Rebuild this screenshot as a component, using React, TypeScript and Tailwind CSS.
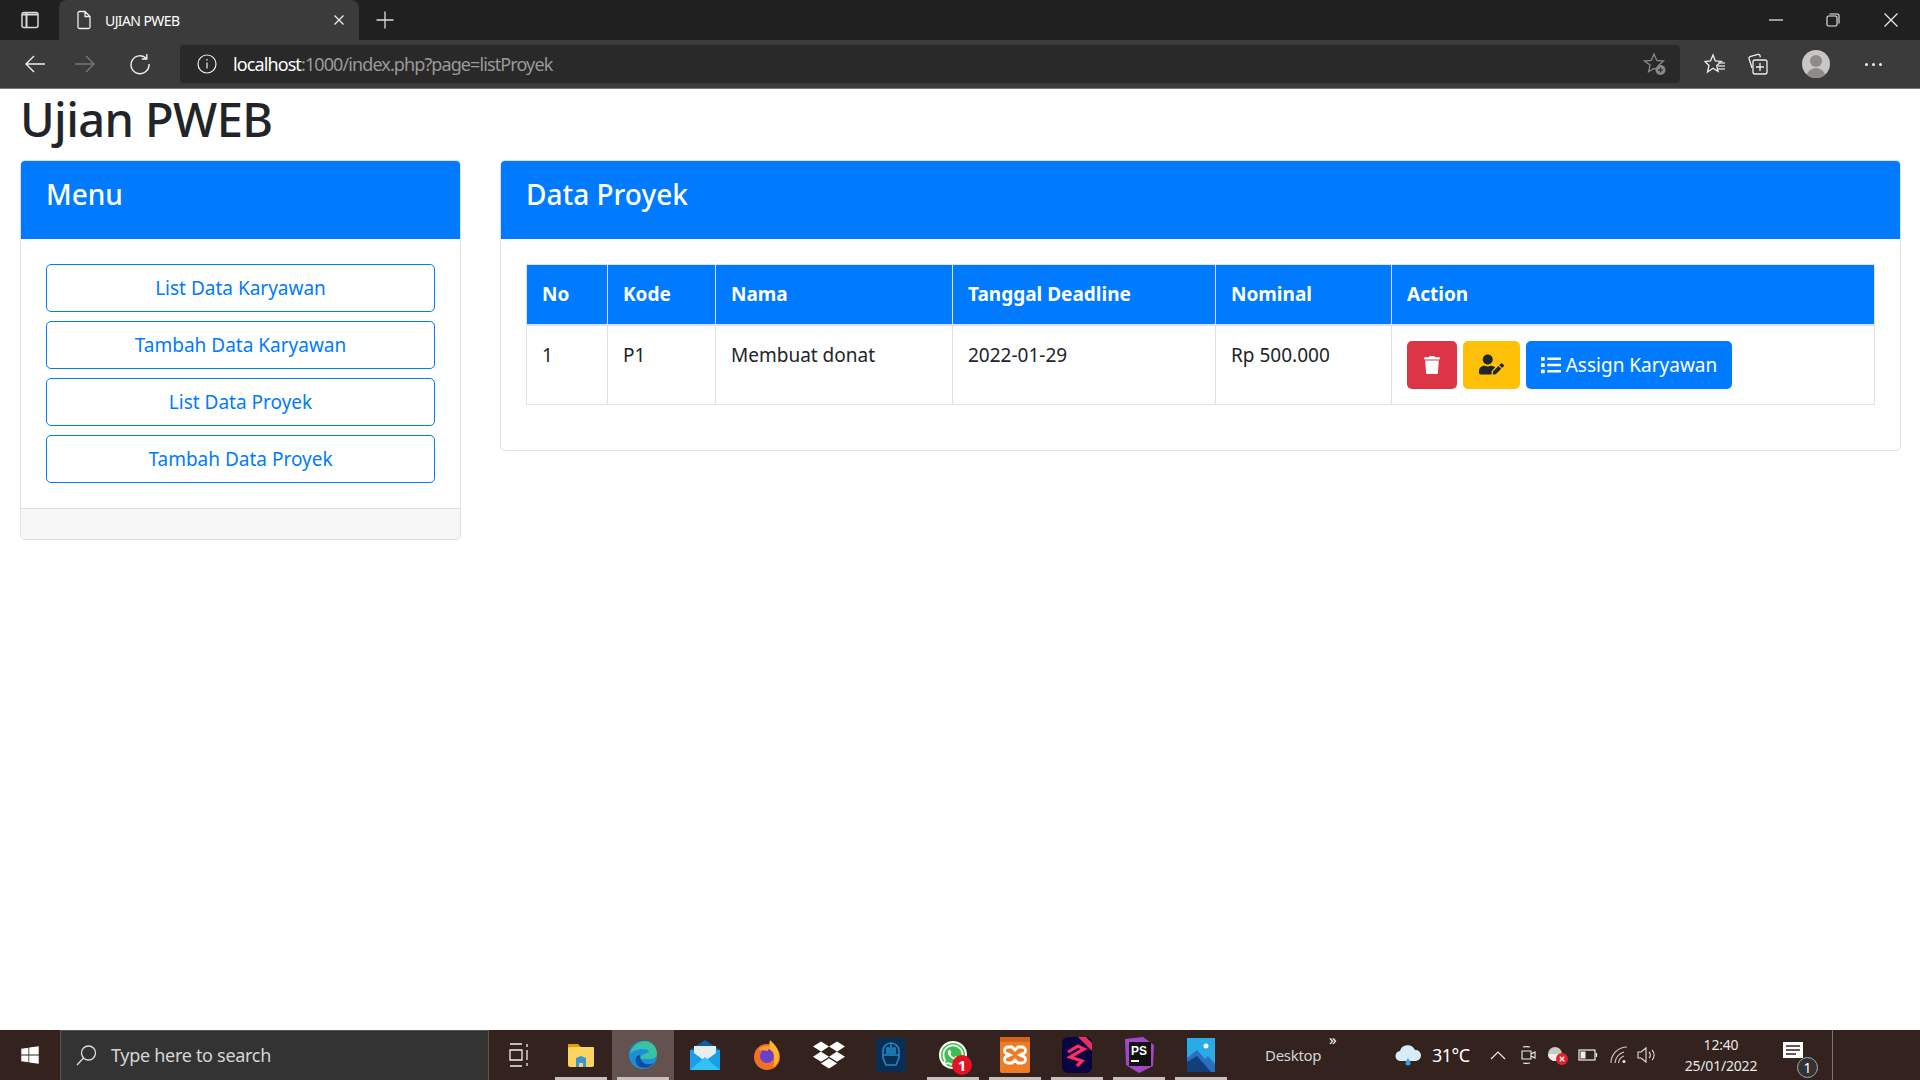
import React from 'react';
import { FaTrash, FaUserEdit, FaList, FaWindows, FaDropbox, FaWhatsapp } from 'react-icons/fa';

const font = "font-['Noto_Sans','Open_Sans',sans-serif]";

const menuItems = ['List Data Karyawan', 'Tambah Data Karyawan', 'List Data Proyek', 'Tambah Data Proyek'];

const columns = [
  { label: 'No', width: 'w-[81px]' },
  { label: 'Kode', width: 'w-[108px]' },
  { label: 'Nama', width: 'w-[237px]' },
  { label: 'Tanggal Deadline', width: 'w-[263px]' },
  { label: 'Nominal', width: 'w-[176px]' },
  { label: 'Action', width: '' },
];

const BrowserChrome: React.FC = () => (
  <div className="shrink-0">
    <div className="h-10 bg-[#202020] flex items-center text-white">
      <div className="w-[59px] flex justify-center">
        <svg width="20" height="20" viewBox="0 0 20 20" fill="none" stroke="#d8d8d8" strokeWidth="1.5">
          <rect x="2" y="2.5" width="16" height="15" rx="2" />
          <path d="M6.5 3v14M2 4.5h16" strokeWidth="2" />
        </svg>
      </div>
      <div className="w-[300px] h-10 bg-[#3b3b3b] rounded-t-lg flex items-center pl-[16px] pr-[14px]">
        <svg width="18" height="20" viewBox="0 0 18 20" fill="none" stroke="#eee" strokeWidth="1.3">
          <path d="M3 3a1.5 1.5 0 0 1 1.5-1.5h5.5L15 6.5V17a1.5 1.5 0 0 1-1.5 1.5h-9A1.5 1.5 0 0 1 3 17zM10 1.5V6.5h5" />
        </svg>
        <span className="ml-[12px] text-[14px] tracking-[-0.6px] flex-1 font-['Noto_Sans',sans-serif]">UJIAN PWEB</span>
        <svg width="12" height="12" viewBox="0 0 12 12" stroke="#eee" strokeWidth="1.3"><path d="M1.5 1.5l9 9M10.5 1.5l-9 9" /></svg>
      </div>
      <div className="w-[45px] flex justify-center ml-[3px]">
        <svg width="18" height="18" viewBox="0 0 18 18" stroke="#ddd" strokeWidth="1.3"><path d="M9 0.5v17M0.5 9h17" /></svg>
      </div>
      <div className="flex-1" />
      <div className="w-[56px] flex justify-center">
        <svg width="14" height="14" viewBox="0 0 14 14" stroke="#eee" strokeWidth="1.2"><path d="M0 7h14" /></svg>
      </div>
      <div className="w-[58px] flex justify-center">
        <svg width="14" height="14" viewBox="0 0 14 14" fill="none" stroke="#eee" strokeWidth="1.1">
          <rect x="1" y="3" width="10" height="10" rx="1.5" />
          <path d="M3.5 1h8a1.5 1.5 0 0 1 1.5 1.5v8" />
        </svg>
      </div>
      <div className="w-[58px] flex justify-center">
        <svg width="14" height="14" viewBox="0 0 14 14" stroke="#eee" strokeWidth="1.2"><path d="M0.5 0.5l13 13M13.5 0.5l-13 13" /></svg>
      </div>
    </div>
    <div className="h-12 bg-[#3b3b3b] flex items-center text-white">
      <div className="w-[180px] flex items-center pl-[12px]">
        <div className="w-[45px] flex justify-center">
          <svg width="22" height="20" viewBox="0 0 22 20" fill="none" stroke="#eee" strokeWidth="1.4"><path d="M21 10H2M10 2l-8 8 8 8" /></svg>
        </div>
        <div className="w-[55px] flex justify-center">
          <svg width="22" height="20" viewBox="0 0 22 20" fill="none" stroke="#777" strokeWidth="1.4"><path d="M1 10h19M12 2l8 8-8 8" /></svg>
        </div>
        <div className="w-[55px] flex justify-center">
          <svg width="22" height="22" viewBox="0 0 22 22" fill="none" stroke="#eee" strokeWidth="1.4"><path d="M17.5 5.5A9 9 0 1 0 20 11M17.8 1v5h-5" /></svg>
        </div>
      </div>
      <div className="w-[1500px] h-[38px] bg-[#292929] rounded-[4px] flex items-center">
        <div className="w-[53px] flex justify-center pl-[1px]">
          <svg width="20" height="20" viewBox="0 0 20 20" fill="none" stroke="#eee" strokeWidth="1.2">
            <circle cx="10" cy="10" r="9" />
            <path d="M10 8.5v6M10 5v1.6" />
          </svg>
        </div>
        <span className="text-[18px] tracking-[-0.9px] flex-1 font-['Noto_Sans',sans-serif]">
          localhost<span className="text-[#9a9a9a]">:1000/index.php?page=listProyek</span>
        </span>
        <div className="w-[50px] flex justify-center">
          <svg width="24" height="24" viewBox="0 0 24 24" fill="none" stroke="#8a8a8a" strokeWidth="1.3">
            <path d="M11 2l2.8 6.4 6.7.6-5.1 4.5 1 4-5.4-1-5.400 3.200 1.500-6.700L1.500 9l6.700-.6z" />
            <circle cx="17.500" cy="18" r="5" fill="#8a8a8a" stroke="none" />
            <path d="M17.500 15.500v5M15 18h5" stroke="#333" strokeWidth="1.300" />
          </svg>
        </div>
      </div>
      <div className="flex-1 flex items-center">
        <div className="w-[70px] flex justify-center">
          <svg width="22" height="22" viewBox="0 0 22 22" fill="none" stroke="#eee" strokeWidth="1.300">
            <path d="M9 2l2.300 5.800 6.200.6-4.800 4 1.400 6-5.100-3.200L3.500 19l1.500-6.500-4-4 5.500-.6z" />
            <path d="M14 10h7M14 13h7M14 16h7" stroke="#ccc" />
          </svg>
        </div>
        <div className="w-[40px] flex justify-center -ml-[12px]">
          <svg width="22" height="22" viewBox="0 0 22 22" fill="none" stroke="#eee" strokeWidth="1.300">
            <path d="M5 15l-3-9.500a1.500 1.500 0 0 1 1-1.800L11 1.500a1.500 1.500 0 0 1 1.800 .8l.6 2" />
            <rect x="6" y="7" width="14" height="14" rx="2" />
            <path d="M13 10v8M9 14h8" />
          </svg>
        </div>
        <div className="w-[76px] flex justify-center">
          <div className="w-7 h-7 rounded-full bg-[#c9c7c4] overflow-hidden relative">
            <div className="absolute left-[8px] top-[5px] w-3 h-3 rounded-full bg-[#8f8c88]" />
            <div className="absolute left-[4px] top-[18px] w-5 h-5 rounded-full bg-[#8f8c88]" />
          </div>
        </div>
        <div className="w-[38px] flex justify-center gap-[4px]">
          <span className="w-[3px] h-[3px] rounded-full bg-[#eee]" />
          <span className="w-[3px] h-[3px] rounded-full bg-[#eee]" />
          <span className="w-[3px] h-[3px] rounded-full bg-[#eee]" />
        </div>
      </div>
    </div>
    <div className="h-px bg-[#777]" />
  </div>
);

const TaskIcon: React.FC<{ running?: boolean; active?: boolean; children: React.ReactNode }> = ({ running, active, children }) => (
  <div className={`w-[62px] h-[50px] relative flex items-center justify-center ${active ? 'bg-[#63524d]' : ''}`}>
    {children}
    {running && <div className="absolute bottom-0 left-[5px] right-[5px] h-[3px] bg-[#c9c0bd]" />}
  </div>
);

const Taskbar: React.FC = () => (
  <div className="h-[50px] shrink-0 bg-[#33221e] flex items-center text-white font-['Noto_Sans',sans-serif]">
    <div className="w-[60px] flex justify-center">
      <FaWindows size={20} color="#fff" />
    </div>
    <div className="w-[429px] h-[50px] bg-[#333333] border border-[#555] border-b-0 flex items-center pl-[14px]">
      <svg width="22" height="24" viewBox="0 0 22 24" fill="none" stroke="#ddd" strokeWidth="1.300">
        <circle cx="13.500" cy="9" r="7" />
        <path d="M8.500 14L2 21" />
      </svg>
      <span className="ml-[14px] text-[18px] tracking-[-0.3px] text-[#d6d6d6]">Type here to search</span>
    </div>
    <div className="w-[62px] ml-[-1px] flex justify-center">
      <svg width="20" height="24" viewBox="0 0 20 24" fill="none" stroke="#eee" strokeWidth="1.300">
        <path d="M1 1h12M1 23h12M1 7h12v10H1zM18 1v3M18 7v10M18 20v3" />
      </svg>
    </div>
    <TaskIcon running>
      <svg width="28" height="28" viewBox="0 0 28 28">
        <path d="M1 3h10l3 3h13v4H1z" fill="#e0a100" />
        <rect x="1" y="6" width="26" height="20" rx="2" fill="#fcd462" />
        <path d="M9 26v-9l5-2 5 2v9h-3v-4h-4v4z" fill="#3b94d8" />
      </svg>
    </TaskIcon>
    <TaskIcon active running>
      <svg width="30" height="30" viewBox="0 0 30 30">
        <circle cx="15" cy="15" r="14" fill="#1c8fd8" />
        <path d="M2 14C4 5 12 1 17 1c7 0 12 6 12 13 0 3-3 5-7 5H12c0-6 9-5 9-8-2-3-14-3-19 3z" fill="#37c3a5" />
        <path d="M12 15c-5 1-6 7-2 11 5 3 12 2 16-3-6 3-14 1-14-8z" fill="#0f4e9e" />
      </svg>
    </TaskIcon>
    <TaskIcon>
      <svg width="32" height="32" viewBox="0 0 32 32">
        <path d="M1 11L16 1l15 10-15 10z" fill="#0b5ea8" />
        <rect x="1" y="11" width="30" height="20" fill="#1a9fe6" />
        <path d="M5 7h22v7l-11 8-11-8z" fill="#e8edf1" />
        <path d="M1 31l15-13 15 13z" fill="#33c2f5" />
      </svg>
    </TaskIcon>
    <TaskIcon>
      <svg width="30" height="32" viewBox="0 0 30 32">
        <circle cx="15" cy="18" r="13" fill="#f0702b" />
        <path d="M18 1c4 4 9 8 9 16 0 5-2 9-6 11 3-5 1-12-3-15-1-4-1-8 0-12z" fill="#ffb527" />
        <circle cx="15" cy="17" r="7" fill="#6c3fc9" />
        <path d="M7 10c3-3 8-4 12-2-2 1-3 2-3 4-4-1-7 0-9-2z" fill="#ff9a2e" />
      </svg>
    </TaskIcon>
    <TaskIcon>
      <FaDropbox size={32} color="#fff" />
    </TaskIcon>
    <TaskIcon>
      <div className="w-[30px] h-[34px] bg-[#0b2d52] flex items-center justify-center">
        <svg width="22" height="26" viewBox="0 0 22 26" fill="none" stroke="#1e88c7" strokeWidth="1.600">
          <path d="M3 9a8 8 0 0 1 16 0v7l-3 7H6l-3-7zM11 1v12M3 13h16M7 6h2v5H7zM13 6h2v5h-2z" />
        </svg>
      </div>
    </TaskIcon>
    <TaskIcon running>
      <div className="relative flex items-center justify-center">
        <div className="w-[28px] h-[28px] bg-[#3fbf4f] rounded-full flex items-center justify-center border-2 border-white">
          <FaWhatsapp size={24} color="#fff" />
        </div>
        <div className="absolute -right-[5px] -bottom-[6px] w-[20px] h-[20px] rounded-full bg-[#e81123] text-[15px] leading-[20px] font-bold text-center">1</div>
      </div>
    </TaskIcon>
    <TaskIcon running>
      <svg width="30" height="36" viewBox="0 0 30 36">
        <rect x="0" y="0" width="30" height="36" rx="2" fill="#ee7c25" />
        <rect x="0" y="0" width="30" height="5" fill="#d4651a" />
        <path d="M8 10h4l3 3 3-3h4a3 3 0 0 1 0 7l-2 1 2 1a3 3 0 0 1 0 7h-4l-3-3-3 3H8a3 3 0 0 1 0-7l2-1-2-1a3 3 0 0 1 0-7z" fill="none" stroke="#fff" strokeWidth="2.800" />
      </svg>
    </TaskIcon>
    <TaskIcon running>
      <svg width="30" height="36" viewBox="0 0 30 36">
        <rect x="0" y="0" width="30" height="36" rx="6" fill="#0a0440" />
        <path d="M16 0h8l6 6v8z" fill="#e8305c" />
        <path d="M6 15l10-6 6 3-14 8 12 4-5 5" fill="none" stroke="#ff2d64" strokeWidth="3.200" />
      </svg>
    </TaskIcon>
    <TaskIcon running>
      <svg width="32" height="36" viewBox="0 0 32 36">
        <path d="M2 2l18-2 11 8-1 21-14 7-13-8z" fill="#a347c9" />
        <rect x="6" y="5" width="22" height="24" fill="#111" />
        <text x="8" y="18" fontSize="12" fontWeight="700" fill="#fff" fontFamily="Liberation Sans, sans-serif">PS</text>
        <rect x="8" y="23" width="8" height="2" fill="#fff" />
      </svg>
    </TaskIcon>
    <TaskIcon running>
      <svg width="28" height="34" viewBox="0 0 28 34">
        <rect x="0" y="0" width="28" height="34" fill="#29abe8" />
        <circle cx="19" cy="8" r="2.500" fill="#fff" />
        <path d="M0 34V20l10-8 8 9 3-3 7 8v8z" fill="#2a6fc0" />
        <path d="M0 34V24l10-6 14 16z" fill="#123e7c" />
      </svg>
    </TaskIcon>
    <div className="w-[147px] ml-[31px] flex items-center relative h-full">
      <span className="text-[15px] tracking-[-0.3px] text-[#d4d4d4] pl-[2px]">Desktop</span>
      <span className="absolute left-[66px] top-[-2px] text-[15px]">»</span>
    </div>
    <div className="w-[30px] -ml-[17px] flex justify-center">
      <svg width="28" height="22" viewBox="0 0 28 22">
        <path d="M7 17a5 5 0 0 1-1-10 8 8 0 0 1 15-1 5.500 5.500 0 0 1 1 11z" fill="#d8ecf8" />
        <path d="M14 14c2 3 2.500 4 2.500 5a2.500 2.500 0 0 1-5 0c0-1 .5-2 2.500-5z" fill="#3a9ae0" />
      </svg>
    </div>
    <span className="ml-[9px] w-[52px] text-[18px] tracking-[-0.5px]">31°C</span>
    <div className="w-[30px] -ml-[1px] flex justify-center">
      <svg width="16" height="10" viewBox="0 0 16 10" fill="none" stroke="#eee" strokeWidth="1.200"><path d="M1 9l7-7 7 7" /></svg>
    </div>
    <div className="w-[30px] flex justify-center">
      <svg width="16" height="22" viewBox="0 0 16 22" fill="none" stroke="#eee" strokeWidth="1.100">
        <path d="M3 3a6 2 0 0 1 7 0M3 19a6 2 0 0 0 7 0M2 7h9v8H2zM11 10l4-2v6l-4-2" />
      </svg>
    </div>
    <div className="w-[30px] flex justify-center">
      <svg width="22" height="22" viewBox="0 0 22 22">
        <circle cx="8" cy="10" r="7" fill="#c9c9c9" />
        <path d="M1 10h14a7 7 0 0 1-14 0z" fill="#eeeeee" />
        <circle cx="15" cy="15" r="6" fill="#e0222f" />
        <path d="M12.800 12.800l4.400 4.400M17.200 12.800l-4.400 4.400" stroke="#fff" strokeWidth="1.300" />
      </svg>
    </div>
    <div className="w-[30px] flex justify-center">
      <svg width="20" height="12" viewBox="0 0 20 12" fill="none" stroke="#eee" strokeWidth="1.200">
        <rect x="1" y="1" width="16" height="10" />
        <rect x="2.500" y="2.500" width="5" height="7" fill="#eee" stroke="none" />
        <path d="M18.500 4v4" />
      </svg>
    </div>
    <div className="w-[31px] flex justify-center">
      <svg width="18" height="18" viewBox="0 0 18 18" fill="none" stroke="#ccc" strokeWidth="1.100">
        <path d="M1 17A16 16 0 0 1 17 1M5 17A12 12 0 0 1 14 6M8.500 17A8.500 8.500 0 0 1 14 10" />
        <circle cx="14" cy="15.500" r="1.500" fill="#eee" stroke="none" />
      </svg>
    </div>
    <div className="w-[26px] flex justify-center">
      <svg width="20" height="18" viewBox="0 0 20 18" fill="none" stroke="#ddd" strokeWidth="1.100">
        <path d="M1 6h3l5-4v14l-5-4H1zM12 6a4 4 0 0 1 0 6M15 4a7 7 0 0 1 0 10" />
      </svg>
    </div>
    <div className="w-[96px] ml-[13px] flex flex-col items-center text-[14px] leading-[21px] tracking-[-0.2px] text-[#e8e8e8]">
      <span>12:40</span>
      <span>25/01/2022</span>
    </div>
    <div className="w-[60px] flex justify-center relative">
      <svg width="20" height="20" viewBox="0 0 20 20" className="-ml-[12px] -mt-[6px]">
        <path d="M0 0h20v16H0z" fill="#fff" />
        <path d="M3 4h14M3 8h14M3 12h10" stroke="#33221e" strokeWidth="1.300" />
      </svg>
      <div className="absolute left-[28px] top-[9px] w-[21px] h-[21px] rounded-full border border-[#aaa] bg-[#333] text-[14px] leading-[19px] text-center">1</div>
    </div>
    <div className="w-px h-full bg-[#777] ml-[3px]" />
  </div>
);

const App: React.FC = () => (
  <div className={`h-screen flex flex-col overflow-hidden bg-white text-[#212529] ${font}`}>
    <BrowserChrome />
    <main className="flex-1 pl-5 pr-[19px]">
      <h1 className="text-[47px] leading-[60px] font-medium tracking-[-0.6px] mb-[11px]">Ujian PWEB</h1>
      <div className="flex items-start gap-[39px]">
        <div className="w-[441px] border border-[#dfdfdf] rounded-[5px] overflow-hidden">
          <div className="bg-[#007bff] text-white h-[78px] pl-[25px] pt-[15px]">
            <h4 className="text-[28px] leading-[36px] font-medium">Menu</h4>
          </div>
          <div className="p-[25px] flex flex-col gap-[9.5px]">
            {menuItems.map((item) => (
              <a key={item} className="h-[47.500px] border border-[#007bff] rounded-[5px] text-[#007bff] text-[19px] flex items-center justify-center">
                {item}
              </a>
            ))}
          </div>
          <div className="h-[31px] border-t border-[#dfdfdf] bg-[#f7f7f7]" />
        </div>
        <div className="flex-1 border border-[#dfdfdf] rounded-[5px] overflow-hidden">
          <div className="bg-[#007bff] text-white h-[78px] pl-[25px] pt-[15px]">
            <h4 className="text-[28px] leading-[36px] font-medium">Data Proyek</h4>
          </div>
          <div className="pt-[25px] px-[25px] pb-[45px]">
            <table className="w-full border-collapse text-[19px]">
              <thead>
                <tr className="bg-[#007bff] text-white h-[60px]">
                  {columns.map((c) => (
                    <th key={c.label} className={`${c.width} border border-[#dee2e6] border-b-2 px-[15px] text-left font-bold`}>{c.label}</th>
                  ))}
                </tr>
              </thead>
              <tbody>
                <tr className="h-[80px]">
                  <td className="border border-[#dee2e6] px-[15px] pt-[15px] align-top">1</td>
                  <td className="border border-[#dee2e6] px-[15px] pt-[15px] align-top">P1</td>
                  <td className="border border-[#dee2e6] px-[15px] pt-[15px] align-top">Membuat donat</td>
                  <td className="border border-[#dee2e6] px-[15px] pt-[15px] align-top">2022-01-29</td>
                  <td className="border border-[#dee2e6] px-[15px] pt-[15px] align-top">Rp 500.000</td>
                  <td className="border border-[#dee2e6] px-[15px] align-middle">
                    <div className="flex gap-[6px]">
                      <button className="w-[50px] h-[48px] bg-[#dc3545] rounded-[5px] flex items-center justify-center text-white">
                        <FaTrash size={18} />
                      </button>
                      <button className="w-[57px] h-[48px] bg-[#ffc107] rounded-[5px] flex items-center justify-center text-[#212529]">
                        <FaUserEdit size={25} />
                      </button>
                      <button className="w-[206px] h-[48px] bg-[#007bff] rounded-[5px] flex items-center justify-center gap-[5px] text-white text-[19px]">
                        <FaList size={20} />
                        Assign Karyawan
                      </button>
                    </div>
                  </td>
                </tr>
              </tbody>
            </table>
          </div>
        </div>
      </div>
    </main>
    <Taskbar />
  </div>
);

export default App;
